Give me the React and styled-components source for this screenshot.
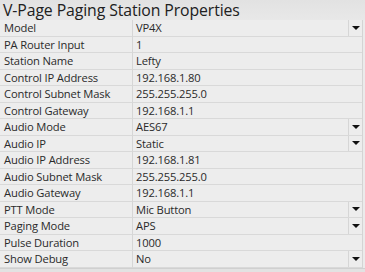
import React from "react"
import styled, { createGlobalStyle } from "styled-components"

const GlobalStyle = createGlobalStyle`
  html, body {
    margin: 0;
    padding: 0;
    background: #f0f0f0;
  }
  body {
    font-family: "Open Sans", "Noto Sans", sans-serif;
    color: #2a2a2a;
  }
`

const Panel = styled.div`
  width: 365px;
  height: 272px;
  display: flex;
  flex-direction: column;
  background: #ebebeb;
  overflow: hidden;
`

const Title = styled.div`
  height: 20px;
  padding-left: 3px;
  display: flex;
  align-items: center;
  font-size: 15.8px;
  color: #202020;
  background: linear-gradient(#e2e2e2, #e8e8e8);
  letter-spacing: -0.1px;
`

const Grid = styled.div`
  display: grid;
  grid-template-columns: 133px 229px;
  grid-auto-rows: 16.5px;
  border-right: 1px solid #d4d4d4;
  width: 362px;
  background: #ededed;
`

const Label = styled.div`
  display: flex;
  align-items: center;
  padding-left: 4px;
  font-size: 11.2px;
  border-bottom: 1px solid #d9d9d9;
  border-right: 1px solid #d6d6d6;
  white-space: nowrap;
  letter-spacing: -0.15px;
`

const Value = styled.div`
  display: flex;
  align-items: center;
  font-size: 11.2px;
  border-bottom: 1px solid #d9d9d9;
  letter-spacing: -0.15px;
  white-space: nowrap;
`

const ValueText = styled.span`
  flex: 1;
  padding-left: 3px;
`

const Drop = styled.div`
  width: 13px;
  height: 100%;
  border-left: 1px solid #d6d6d6;
  display: flex;
  align-items: center;
  justify-content: center;
`

const Arrow = styled.span`
  width: 0;
  height: 0;
  border-left: 4px solid transparent;
  border-right: 4px solid transparent;
  border-top: 4px solid #111;
`

const Footer = styled.div`
  flex: 1;
  background: #e2e2e2;
  border-top: 1px solid #d0d0d0;
`

const rows = [
  ["Model", "VP4X", true],
  ["PA Router Input", "1"],
  ["Station Name", "Lefty"],
  ["Control IP Address", "192.168.1.80"],
  ["Control Subnet Mask", "255.255.255.0"],
  ["Control Gateway", "192.168.1.1"],
  ["Audio Mode", "AES67", true],
  ["Audio IP", "Static", true],
  ["Audio IP Address", "192.168.1.81"],
  ["Audio Subnet Mask", "255.255.255.0"],
  ["Audio Gateway", "192.168.1.1"],
  ["PTT Mode", "Mic Button", true],
  ["Paging Mode", "APS", true],
  ["Pulse Duration", "1000"],
  ["Show Debug", "No", true],
]

export default function App() {
  return (
    <Panel>
      <GlobalStyle />
      <Title>V-Page Paging Station Properties</Title>
      <Grid>
        {rows.map(([label, value, drop]) => (
          <React.Fragment key={label}>
            <Label>{label}</Label>
            <Value>
              <ValueText>{value}</ValueText>
              {drop && (
                <Drop>
                  <Arrow />
                </Drop>
              )}
            </Value>
          </React.Fragment>
        ))}
      </Grid>
      <Footer />
    </Panel>
  )
}
